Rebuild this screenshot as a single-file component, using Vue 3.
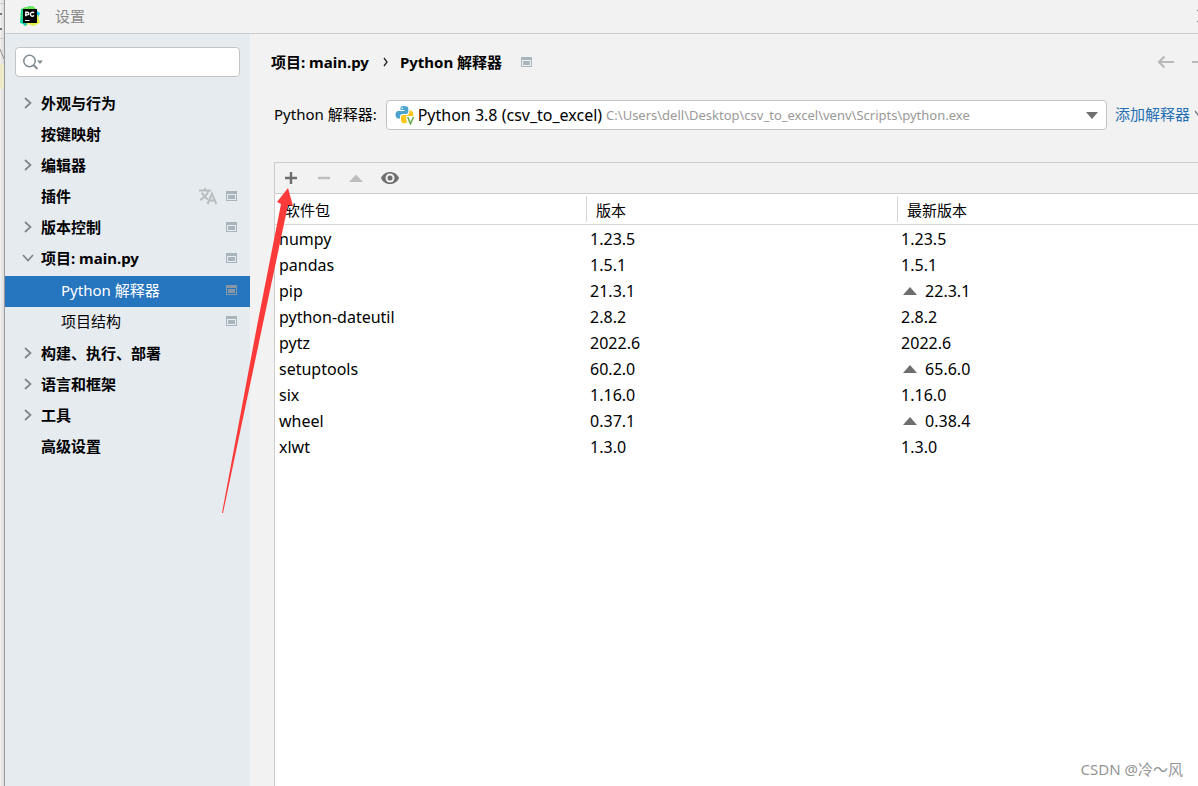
<script setup>
import { ref } from 'vue'

const query = ref('')
const interpreter = ref('venv')

const tree = [
  { label: '外观与行为', arrow: 'right' },
  { label: '按键映射' },
  { label: '编辑器', arrow: 'right' },
  { label: '插件', translate: true, badge: true },
  { label: '版本控制', arrow: 'right', badge: true },
  {
    label: '项目: main.py',
    arrow: 'down',
    badge: true,
    children: [
      { label: 'Python 解释器', selected: true },
      { label: '项目结构' },
    ],
  },
  { label: '构建、执行、部署', arrow: 'right' },
  { label: '语言和框架', arrow: 'right' },
  { label: '工具', arrow: 'right' },
  { label: '高级设置' },
]

const packages = [
  { name: 'numpy', version: '1.23.5', latest: '1.23.5' },
  { name: 'pandas', version: '1.5.1', latest: '1.5.1' },
  { name: 'pip', version: '21.3.1', latest: '22.3.1', upgrade: true },
  { name: 'python-dateutil', version: '2.8.2', latest: '2.8.2' },
  { name: 'pytz', version: '2022.6', latest: '2022.6' },
  { name: 'setuptools', version: '60.2.0', latest: '65.6.0', upgrade: true },
  { name: 'six', version: '1.16.0', latest: '1.16.0' },
  { name: 'wheel', version: '0.37.1', latest: '0.38.4', upgrade: true },
  { name: 'xlwt', version: '1.3.0', latest: '1.3.0' },
]
</script>

<template>
  <div class="screen">
    <div class="editor-edge" aria-hidden="true">
      <i class="rule top"></i>
      <i class="tick first"></i>
      <i class="tick second"></i>
      <i class="rule"></i>
      <svg class="slash" width="4" height="14" viewBox="0 0 4 14"><path d="M0 2L4 12" stroke="#8c8c8c" fill="none" /></svg>
      <i class="caret-line"></i>
    </div>

    <div class="window">
      <header class="titlebar">
        <svg width="20" height="20" viewBox="0 0 20 20" aria-hidden="true">
          <path d="M1 3L10 0L15 3L12 12L6 19L0 17Z" fill="#21d789" />
          <path d="M14 3L17 5L20 7L18 12L14 10Z" fill="#07c3f2" />
          <path d="M2 2L13 0L17 4L15 9L9 6Z" fill="#6be85a" />
          <path d="M3 14L10 8L18 9L20 17L13 20L9 18L5 20Z" fill="#e3f04a" />
          <path d="M0 15L5 11L7 19L5 20L2 17Z" fill="#16d0b4" />
          <rect x="3" y="3" width="14" height="14" fill="#000" />
          <path d="M5.8 10.2V6.2H7.400A1.300 1.300 0 0 1 7.400 8.900H5.800M14 7A2 2 0 1 0 14 9.400" fill="none" stroke="#fff" stroke-width="1.400" />
          <path d="M5 14.500H9.500" stroke="#fff" />
        </svg>
        <h1>设置</h1>
        <button class="close" type="button" aria-label="关闭">
          <svg width="12" height="12" viewBox="0 0 12 12"><path d="M0 0L12 12M12 0L0 12" stroke="#777" fill="none" /></svg>
        </button>
      </header>

      <div class="content">
        <aside class="sidebar">
          <div class="search">
            <svg width="22" height="18" viewBox="0 0 22 18" aria-hidden="true">
              <circle cx="6.500" cy="8" r="5.700" fill="none" stroke="#7f8b91" stroke-width="1.500" />
              <path d="M10.500 12L14.500 16" stroke="#7f8b91" stroke-width="1.800" />
              <path d="M14 7.500H20L17 11Z" fill="#7f8b91" />
            </svg>
            <input v-model="query" type="text" aria-label="搜索设置" />
          </div>

          <ul class="tree">
            <li v-for="item in tree" :key="item.label">
              <a href="#" class="row">
                <span class="arrow">
                  <svg v-if="item.arrow" width="12" height="12" viewBox="0 0 12 12" fill="none" stroke="#7f8487" stroke-width="1.700">
                    <path v-if="item.arrow === 'right'" d="M3 1L8.500 6L3 11" />
                    <path v-else d="M1 3L6 8.500L11 3" />
                  </svg>
                </span>
                <span class="label">{{ item.label }}</span>
                <svg v-if="item.translate" class="translate" width="18" height="18" viewBox="0 0 18 18" fill="none" stroke="#b9bec1" stroke-width="2">
                  <path d="M0 3.500H12M6 1V3.500M9.500 3.500C8.500 7.500 5.500 10.500 1 13M2.800 5.500C4.500 9 6.500 11 9 12.300" />
                  <path d="M8.500 17L13 6.500L17.300 17M10 13.500H16" />
                </svg>
                <svg v-if="item.badge" class="badge" width="11" height="10" viewBox="0 0 11 10">
                  <path d="M0 0H11V10H0ZM1 3V9H10V3Z" fill="currentColor" fill-rule="evenodd" />
                  <rect x="2" y="4" width="7" height="4" fill="currentColor" />
                </svg>
              </a>
              <ul v-if="item.children" class="children">
                <li v-for="child in item.children" :key="child.label">
                  <a href="#" class="row child" :class="{ selected: child.selected }">
                    <span class="label">{{ child.label }}</span>
                    <svg class="badge" width="11" height="10" viewBox="0 0 11 10">
                      <path d="M0 0H11V10H0ZM1 3V9H10V3Z" fill="currentColor" fill-rule="evenodd" />
                      <rect x="2" y="4" width="7" height="4" fill="currentColor" />
                    </svg>
                  </a>
                </li>
              </ul>
            </li>
          </ul>
        </aside>

        <main class="main">
          <nav class="crumbs" aria-label="路径">
            <span>项目: main.py</span>
            <svg class="sep" width="6" height="10" viewBox="0 0 6 10"><path d="M1 1L4 5L1 9" fill="none" stroke="#222" stroke-width="1.300" /></svg>
            <span>Python 解释器</span>
            <svg class="badge crumb-badge" width="11" height="10" viewBox="0 0 11 10">
              <path d="M0 0H11V10H0ZM1 3V9H10V3Z" fill="currentColor" fill-rule="evenodd" />
              <rect x="2" y="4" width="7" height="4" fill="currentColor" />
            </svg>
            <div class="history">
              <button type="button" aria-label="后退">
                <svg width="18" height="14" viewBox="0 0 18 14" fill="none" stroke="#b9b9b9" stroke-width="2.200"><path d="M17 7H2M7.500 1.500L2 7L7.500 12.500" /></svg>
              </button>
              <button type="button" aria-label="前进">
                <svg width="18" height="14" viewBox="0 0 18 14" fill="none" stroke="#b9b9b9" stroke-width="2.200"><path d="M1 7H16M10.500 1.500L16 7L10.500 12.500" /></svg>
              </button>
            </div>
          </nav>

          <div class="interpreter">
            <label for="interpreter">Python 解释器:</label>
            <div class="combo">
              <svg width="20" height="20" viewBox="0 0 20 20" aria-hidden="true">
                <path d="M9 1C5.800 1 5.500 2.300 5.500 3.500V5H9.500V6H3.500C1.500 6 .5 7.500 .5 9.800S1.700 13.500 3.500 13.500H5V11.500C5 9.800 6.200 9 7.700 9H11C12.500 9 13.300 8 13.300 6.800V3.500C13.300 1.700 11.500 1 9 1Z" fill="#4ba3cf" />
                <circle cx="7.300" cy="3.200" r=".8" fill="#fff" />
                <path d="M14.300 5.500V7.300C14.300 9 13.200 10 11.700 10H8C6.700 10 6 11 6 12.200V15.500C6 17.500 8 18.300 10 18.300L12 17.800L11 11H18.500C18.500 7.500 17.500 5.500 14.300 5.500Z" fill="#fdc71e" />
                <path d="M12.700 12L15.500 18.800L18.500 12" fill="none" stroke="#fff" stroke-width="3.500" />
                <path d="M12.700 12L15.500 18.800L18.500 12" fill="none" stroke="#5fae46" stroke-width="1.500" />
              </svg>
              <span class="env" aria-hidden="true">Python 3.8 (csv_to_excel)</span>
              <span class="path" aria-hidden="true">C:\Users\dell\Desktop\csv_to_excel\venv\Scripts\python.exe</span>
              <svg class="drop" width="12" height="7" viewBox="0 0 12 7" aria-hidden="true"><path d="M0 0H12L6 7Z" fill="#6e6e6e" /></svg>
              <select id="interpreter" v-model="interpreter">
                <option value="venv">Python 3.8 (csv_to_excel)</option>
              </select>
            </div>
            <a href="#" class="add">添加解释器
              <svg width="10" height="8" viewBox="0 0 10 8"><path d="M1 1L5 6L9 1" fill="none" stroke="#7c868c" stroke-width="1.500" /></svg>
            </a>
          </div>

          <section class="packages">
            <div class="toolbar">
              <button type="button" aria-label="安装">
                <svg width="18" height="18" viewBox="0 0 18 18"><path d="M9 3V15M3 9H15" stroke="#6e6e6e" stroke-width="2.400" /></svg>
              </button>
              <button type="button" aria-label="卸载">
                <svg width="18" height="18" viewBox="0 0 18 18"><path d="M3 9H15" stroke="#bdbdbd" stroke-width="2.400" /></svg>
              </button>
              <button type="button" aria-label="升级">
                <svg width="18" height="18" viewBox="0 0 18 18"><path d="M1 13L8 5.500L15 13Z" fill="#bdbdbd" /></svg>
              </button>
              <button type="button" aria-label="显示早期版本">
                <svg width="18" height="18" viewBox="0 0 18 18">
                  <path d="M0 9C3.500 1 14.500 1 18 9C14.500 17 3.500 17 0 9Z" fill="#6e6e6e" />
                  <circle cx="9" cy="9" r="4.500" fill="#f2f2f2" />
                  <circle cx="9" cy="9" r="2.500" fill="#6e6e6e" />
                </svg>
              </button>
            </div>
            <table>
              <thead>
                <tr>
                  <th scope="col"><span>软件包</span></th>
                  <th scope="col"><span>版本</span></th>
                  <th scope="col"><span>最新版本</span></th>
                </tr>
              </thead>
              <tbody>
                <tr v-for="pkg in packages" :key="pkg.name">
                  <td>{{ pkg.name }}</td>
                  <td>{{ pkg.version }}</td>
                  <td>
                    <svg v-if="pkg.upgrade" class="up" width="14" height="8" viewBox="0 0 14 8"><path d="M0 8L7 0L14 8Z" fill="#6e6e6e" /></svg>{{ pkg.latest }}
                  </td>
                </tr>
              </tbody>
            </table>
          </section>
        </main>
      </div>
    </div>

    <svg class="pointer" width="80" height="330" viewBox="0 0 80 330" aria-hidden="true">
      <path d="M68 2L73 20L68 19L42 142L3 327L2 327L37 140L61 18L57 16Z" fill="#fc3a3a" />
    </svg>
    <div class="watermark">CSDN @冷～风</div>
  </div>
</template>

<style>
body {
  overflow: hidden;
}
</style>

<style scoped>
.screen {
  position: relative;
  display: flex;
  height: 100vh;
  overflow: hidden;
  background: #f2f2f2;
  color: #000;
  font-family: "Noto Sans", "Noto Sans CJK SC", sans-serif;
  font-size: 15px;
  line-height: 20px;
}
.screen * {
  box-sizing: border-box;
}
ul {
  list-style: none;
  margin: 0;
  padding: 0;
}
a {
  color: inherit;
  text-decoration: none;
}
button {
  display: flex;
  padding: 0;
  border: 0;
  background: none;
}
svg {
  display: block;
  flex: none;
}
.editor-edge {
  display: flex;
  flex-direction: column;
  flex: none;
  width: 4px;
  background: linear-gradient(to right, #f0f0f0, #dcdcdc);
}
.rule {
  height: 1px;
  margin-top: 8px;
  background: #c8c8c8;
}
.rule.top {
  margin-top: 3px;
}
.tick {
  width: 2px;
  height: 2px;
  background: #777;
}
.first {
  margin-top: 9px;
}
.second {
  margin-top: 13px;
}
.slash {
  margin-top: 8px;
}
.caret-line {
  height: 25px;
  margin-top: 3px;
  background: #eeeac8;
}
.window {
  display: flex;
  flex: 1;
  flex-direction: column;
  min-width: 0;
  border-left: 1px solid #9a9a9a;
}
.titlebar {
  display: flex;
  align-items: center;
  flex: none;
  height: 34px;
  padding: 0 0 2px 15px;
  border-bottom: 1px solid #cdcdcd;
}
h1 {
  margin: 0 0 0 15px;
  color: #8a8a8a;
  font-size: 15px;
  font-weight: 400;
}
.close {
  margin: 0 -11px 0 auto;
}
.content {
  display: flex;
  flex: 1;
  min-height: 0;
}
.sidebar {
  flex: none;
  width: 245px;
  padding-top: 13px;
  background: #e6ebf0;
}
.search {
  display: flex;
  align-items: center;
  height: 30px;
  margin: 0 10px 12px;
  padding-left: 7px;
  border: 1px solid #c4c4c4;
  border-radius: 4px;
  background: #fff;
}
.search input {
  flex: 1;
  min-width: 0;
  border: 0;
  outline: 0;
  background: none;
  font: inherit;
}
.row {
  display: flex;
  align-items: center;
  height: 31px;
  padding: 0 13px 4px 17px;
  font-weight: 700;
}
.arrow {
  width: 19px;
}
.label {
  flex: 1;
}
.translate {
  margin-right: 9px;
}
.badge {
  color: #a9b5bd;
}
.children {
  margin: 1px 0;
}
.child {
  padding-left: 56px;
  font-weight: 400;
}
.selected {
  background: #2675bf;
  color: #fff;
}
.selected .badge {
  color: #8797a6;
}
.main {
  display: flex;
  flex: 1;
  flex-direction: column;
  min-width: 0;
  padding-left: 24px;
}
.crumbs {
  display: flex;
  align-items: center;
  height: 56px;
  margin-left: -3px;
  font-weight: 700;
}
.sep {
  margin: 0 11px 0 14px;
}
.crumb-badge {
  margin-left: 19px;
}
.history {
  display: flex;
  gap: 16px;
  margin: 0 -11px 0 auto;
}
.interpreter {
  display: flex;
  align-items: center;
  gap: 8px;
  height: 50px;
}
.interpreter label {
  padding: 0 1px 2px 0;
}
.combo {
  position: relative;
  display: flex;
  align-items: center;
  flex: 1;
  min-width: 0;
  height: 30px;
  padding: 0 8px;
  border: 1px solid #c4c4c4;
  border-radius: 4px;
  background: #fff;
  white-space: nowrap;
}
.env {
  margin-left: 3px;
  font-size: 16px;
}
.path {
  margin-left: 4px;
  color: #999;
  font-size: 13px;
}
.drop {
  margin-left: auto;
}
.combo select {
  position: absolute;
  inset: 0;
  width: 100%;
  opacity: 0;
}
.add {
  display: flex;
  align-items: center;
  gap: 4px;
  margin-right: -6px;
  padding-bottom: 2px;
  color: #2470b3;
}
.packages {
  display: flex;
  flex: 1;
  flex-direction: column;
  margin-top: 22px;
  border: solid #cdcdcd;
  border-width: 1px 0 0 1px;
  background: #fff;
}
.toolbar {
  display: flex;
  align-items: center;
  gap: 15px;
  height: 31px;
  padding-left: 7px;
  border-bottom: 1px solid #cdcdcd;
  background: #f2f2f2;
}
table {
  width: 100%;
  border-spacing: 0;
  table-layout: fixed;
}
th {
  height: 31px;
  padding: 2px 0;
  border-bottom: 1px solid #d6d6d6;
  font-weight: 400;
  text-align: left;
}
th:nth-child(1),
th:nth-child(2) {
  width: 33.7%;
}
th span {
  display: block;
  padding: 4px 9px 2px;
  border-left: 1px solid #d6d6d6;
}
th:first-child span {
  border-left-color: transparent;
}
td {
  height: 26px;
  padding: 0 4px;
  font-size: 16px;
}
tbody tr:first-child td {
  height: 27px;
  padding-top: 1px;
}
.up {
  display: inline-block;
  margin: 0 8px 2px 2px;
}
.pointer {
  position: absolute;
  top: 186px;
  left: 220px;
  pointer-events: none;
}
.watermark {
  position: absolute;
  right: 15px;
  bottom: 7px;
  color: #959595;
  font-size: 15px;
}
</style>
